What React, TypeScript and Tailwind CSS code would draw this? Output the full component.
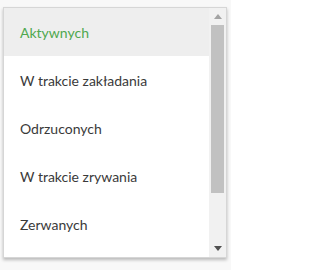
const items = ["Aktywnych", "W trakcie zakładania", "Odrzuconych", "W trakcie zrywania", "Zerwanych"];

export default function App() {
  return (
    <div className="h-[270px] w-[231px] bg-[#f8f8f8] pt-[7px] pl-[3px] font-['Lato','Liberation_Sans',sans-serif]">
      <div className="flex h-[251px] w-[224px] border border-[#d6d6d6] bg-white shadow-[0_2px_3px_rgba(0,0,0,0.25)]">
        <ul className="flex-1 overflow-hidden">
          {items.map((item, i) => (
            <li
              key={item}
              className={
                i === 0
                  ? "flex h-[48px] items-center bg-[#eeeeee] pl-[16px] text-[14px] text-[#4fa84f]"
                  : "flex h-[48px] items-center pl-[16px] text-[14px] text-[#3a3a3a]"
              }
            >
              {item}
            </li>
          ))}
        </ul>
        <div className="flex w-[17px] flex-col bg-[#f1f1f1]">
          <div className="flex h-[17px] items-center justify-center">
            <svg width="8" height="5" viewBox="0 0 8 5">
              <path d="M0 5 L4 0 L8 5 Z" fill="#a3a3a3" />
            </svg>
          </div>
          <div className="flex-1 px-[2px]">
            <div className="h-[168px] bg-[#c1c1c1]" />
          </div>
          <div className="flex h-[17px] items-center justify-center">
            <svg width="8" height="5" viewBox="0 0 8 5">
              <path d="M0 0 L8 0 L4 5 Z" fill="#505050" />
            </svg>
          </div>
        </div>
      </div>
    </div>
  );
}
